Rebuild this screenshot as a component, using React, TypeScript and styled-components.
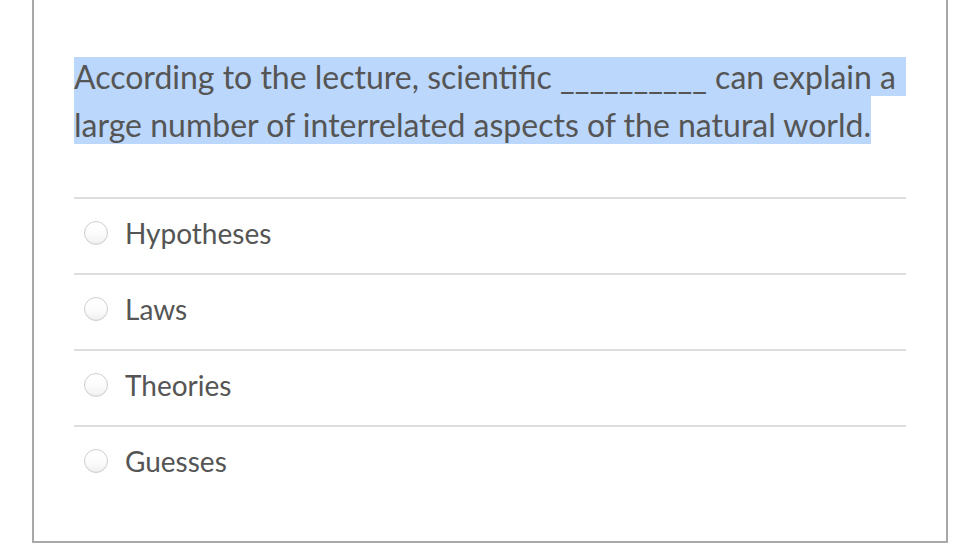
import React from "react";
import styled, { createGlobalStyle } from "styled-components";

const GlobalStyle = createGlobalStyle`
  html, body {
    margin: 0;
    padding: 0;
    background: #ffffff;
  }
  body {
    font-family: Lato, "Liberation Sans", sans-serif;
    color: #555555;
  }
`;

const Page = styled.div`
  padding-left: 32px;
  width: 916px;
`;

const Card = styled.div`
  border: 2px solid #a8a8a8;
  border-top: none;
  padding: 53px 40px 40px 40px;
  background: #ffffff;
`;

const Question = styled.div`
  font-size: 32px;
  line-height: 48px;
  margin-bottom: 48px;
`;

// selected text: the first line keeps its own height, the next one fills the gap above it
const Marked = styled.span<{ $joined?: boolean }>`
  background: #bbd7fb;
  padding: ${(p) => (p.$joined ? "10px 0 0 0" : "0 10px 0 0")};
`;

const AnswerList = styled.div`
  display: flex;
  flex-direction: column;
`;

const Answer = styled.label`
  display: flex;
  align-items: center;
  height: 76px;
  padding-bottom: 6px;
  box-sizing: border-box;
  border-top: 2px solid #dddddd;
  font-size: 28px;
  color: #555555;
`;

const Radio = styled.span`
  width: 22px;
  height: 22px;
  margin-left: 10px;
  margin-right: 17px;
  border-radius: 50%;
  border: 1px solid #cfcfcf;
  background: linear-gradient(180deg, #ffffff 0%, #fcfcfc 55%, #f0f0f0 100%);
  box-shadow: inset 0 -1px 1px rgba(0, 0, 0, 0.04);
  flex-shrink: 0;
`;

const answers = ["Hypotheses", "Laws", "Theories", "Guesses"];

function App() {
  return (
    <Page>
      <GlobalStyle />
      <Card>
        <Question>
          <Marked>According to the lecture, scientific __________ can explain a</Marked>{" "}
          <Marked $joined>large number of interrelated aspects of the natural world.</Marked>
        </Question>
        <AnswerList>
          {answers.map((a) => (
            <Answer key={a}>
              <Radio />
              {a}
            </Answer>
          ))}
        </AnswerList>
      </Card>
    </Page>
  );
}

export default App;
